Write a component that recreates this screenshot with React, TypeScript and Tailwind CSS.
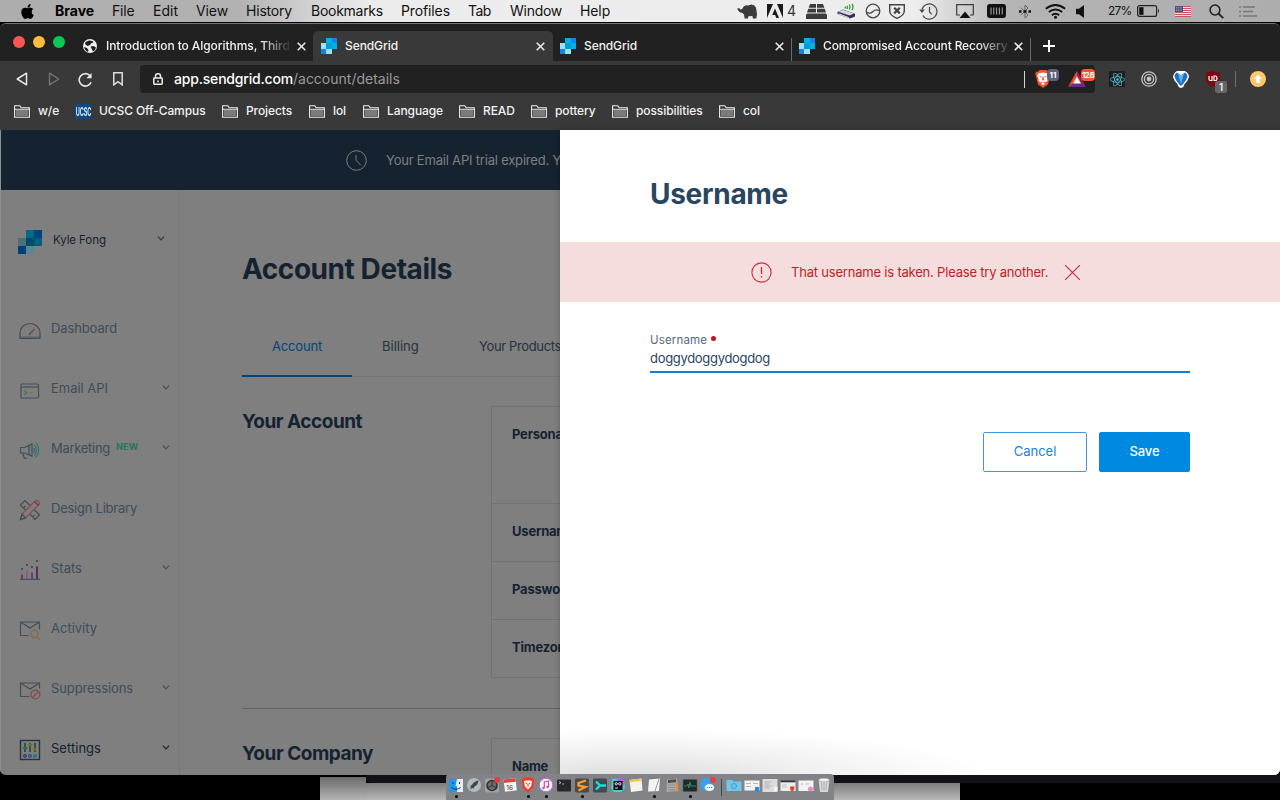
import React from "react";
import { FaApple, FaReact } from "react-icons/fa";

/* ---------- shared ---------- */

function GridLogo({ className, dim = false }: { className: string; dim?: boolean }) {
  const c = dim
    ? ["#006b84", "#00427f", "#4d7078", "#004b6b", "#00617d", "#003f7b", "#5c8790"]
    : ["#00b2e3", "#1a82e2", "#99e1f4", "#009dd9", "#00b2e3", "#1a82e2", "#99e1f4"];
  return (
    <svg viewBox="0 0 3 3" className={className} shapeRendering="crispEdges">
      <rect x="1" y="0" width="1" height="1" fill={c[0]} />
      <rect x="2" y="0" width="1" height="1" fill={c[1]} />
      <rect x="0" y="1" width="1" height="1" fill={c[2]} />
      <rect x="1" y="1" width="1" height="1" fill={c[3]} />
      <rect x="2" y="1" width="1" height="1" fill={c[4]} />
      <rect x="0" y="2" width="1" height="1" fill={c[5]} />
      <rect x="1" y="2" width="1" height="1" fill={c[6]} />
    </svg>
  );
}

function Lion({ className }: { className: string }) {
  return (
    <svg viewBox="0 0 16 18" className={className}>
      <path d="M4.5 0h7l1.6 1.7 1.7-.2 1 2.4-.6 1.5-2 8.3q-.3 1-1.2 1.6L8 18l-4-2.7q-.9-.6-1.2-1.6l-2-8.3L.2 3.9l1-2.4 1.7.2z" fill="#f9502a" />
      <path d="M3.5 3.2 8 2.6l4.5.6 1.3 2.4-1.5 3.6.3 1.5-2 1.7-1.2-.7-1.4.8-1.4-.8-1.2.7-2-1.7.3-1.5-1.5-3.6zM8 12.5l2.2 1.1L8 15.2l-2.2-1.6z" fill="#fff" />
      <path d="M4 5.8l2.7.6-.6 1.3zM12 5.8l-2.7.6.6 1.3zM7.4 7h1.2l.4 3-1 .7-1-.7z" fill="#f9502a" />
    </svg>
  );
}

/* ---------- macOS menu bar ---------- */

const menus: [string, string][] = [
  ["File", "w-[41px] tracking-[-0.2px]"],
  ["Edit", "w-[43px] tracking-[0px]"],
  ["View", "w-[50px] tracking-[-0.1px]"],
  ["History", "w-[65px] tracking-[-0.2px]"],
  ["Bookmarks", "w-[90px] tracking-[-0.27px]"],
  ["Profiles", "w-[67px] tracking-[-0.12px]"],
  ["Tab", "w-[42px] tracking-[-0.5px]"],
  ["Window", "w-[70px] tracking-[-0.27px]"],
  ["Help", "w-[40px] tracking-[-0.1px]"],
];

function MenuBar() {
  return (
    <div className="flex h-[22px] shrink-0 items-center bg-[linear-gradient(90deg,#adadad_0px,#b2b2b2_240px,#ececec_370px,#ededed_915px,#b4b4b4_1010px,#adadad_1280px)] text-[14px] leading-[22px] text-[#111]">
      <FaApple className="ml-[20px] h-[17px] w-[15px] shrink-0 text-black" />
      <span className="ml-[20px] w-[57px] font-bold text-black">Brave</span>
      {menus.map(([t, c]) => (
        <span key={t} className={`shrink-0 ${c}`}>{t}</span>
      ))}
      <svg viewBox="0 0 20 15" className="ml-[117px] h-[15px] w-[20px] shrink-0" fill="#3c3c3c">
        <path d="M.2 4.8 2 4l1.400 1.600 1.800-.6Q6.200 1.800 9 1.200l2.300.2 3-.9q4.300.3 5 4.800L20 10.200l-.7 4.400h-3.400l-.5-2.600-4 .2-.5 2.400H7.600L7 10.600 5.400 9l-2.600-.8L1.200 6.600z" />
      </svg>
      <svg viewBox="0 0 16 14" className="ml-[10px] h-[14px] w-[16px] shrink-0" fill="#1b1b1b">
        <path d="M0 0h6L0 14zM10 0h6v14zM8 4.600 12 14H9.300l-1.200-3H5.200z" />
      </svg>
      <span className="ml-[4px] w-[11px] shrink-0 text-[14px] text-[#333]">4</span>
      <svg viewBox="0 0 21 15" className="ml-[8px] h-[15px] w-[21px] shrink-0" fill="#3c3c3c">
        <path d="M4 0h6v3.800H2.700zM11 0h6l1.300 3.800H11zM2.300 4.800h7.700v3.600H1zM11 4.800h7.700L20 8.400h-9zM1 9.600h19l1 1.500V15H0v-4z" />
      </svg>
      <svg viewBox="0 0 19 16" className="ml-[10px] h-[16px] w-[19px] shrink-0">
        <path d="M.5 9 6 6.500l12 4.200v2.800L13 15.500.5 11z" fill="#2d2d55" />
        <path d="M1.200 8.800 6 6.800l11 3.800-4.500 2z" fill="#d5d8e5" />
        <path d="M1.500 10.200l10.500 4v.8L1.500 11.200z" fill="#f2f2f8" />
        <path d="M8.300 5.500V3.500M10.300 6V2.800M12.300 6.500Q13.800 4 12.300 1.500M14.800 7Q17 4 15 .8" fill="none" stroke="#28a032" strokeWidth="1.300" />
      </svg>
      <svg viewBox="0 0 16 16" className="ml-[9px] h-[16px] w-[16px] shrink-0" fill="none" stroke="#4a4a4a" strokeWidth="1.300">
        <circle cx="8" cy="8" r="6.800" />
        <path d="M1.500 9q3.500 2.500 6.500-.5t6.500-.5" />
      </svg>
      <svg viewBox="0 0 16 15" className="ml-[8px] h-[15px] w-[16px] shrink-0" fill="none" stroke="#444" strokeWidth="1.400">
        <path d="M.7.7h14.600v6q0 4.800-7.300 7.600Q.7 11.500.7 6.700z" />
        <path d="M5.200 3.800l5.600 5.600M10.800 3.800 5.200 9.400" strokeWidth="2.200" />
      </svg>
      <svg viewBox="0 0 19 17" className="ml-[14px] h-[17px] w-[19px] shrink-0" fill="none" stroke="#4a4a4a" strokeWidth="1.200">
        <path d="M3 6.500a7.600 7.600 0 1 1 .8 6" />
        <path d="M.2 6.500h5.600L3 10z" fill="#4a4a4a" stroke="none" />
        <path d="M10.500 4v5l2.300 2.300" />
      </svg>
      <svg viewBox="0 0 18 15" className="ml-[18px] h-[15px] w-[18px] shrink-0">
        <path d="M4 11H.7V.7h16.600V11H14" fill="none" stroke="#3a3a3a" strokeWidth="1.200" />
        <path d="M9 7.500 14.500 14h-11z" fill="#111" />
      </svg>
      <svg viewBox="0 0 19 14" className="ml-[13px] h-[14px] w-[19px] shrink-0">
        <rect x=".8" y=".8" width="17.400" height="12.400" rx="2" fill="#111" stroke="#111" strokeWidth="1.500" />
        <path d="M4 3.500v7M6.800 3.500v7M9.600 3.500v7M12.400 3.500v7M15.200 3.500v7" stroke="#a0a0a0" strokeWidth="1.100" />
      </svg>
      <svg viewBox="0 0 12 15" className="ml-[13px] h-[15px] w-[12px] shrink-0" fill="none" stroke="#666" strokeWidth="1">
        <path d="M2 3.700 9 11l-3 3V1l3 3-7 7.300" />
        <path d="M0 7.500h2.500M4.500 7.500h3M9.500 7.500H12" stroke="#111" strokeWidth="2.400" />
      </svg>
      <svg viewBox="0 0 21 15" className="ml-[14px] h-[15px] w-[21px] shrink-0" fill="none" stroke="#111" strokeWidth="1.900">
        <path d="M.8 4.800q9.700-7.600 19.400 0M3.800 8q6.700-5.200 13.400 0M6.800 11.200q3.700-2.800 7.400 0" />
        <circle cx="10.500" cy="13.200" r="1.500" fill="#111" stroke="none" />
      </svg>
      <svg viewBox="0 0 9 13" className="ml-[10px] h-[13px] w-[9px] shrink-0" fill="#111">
        <path d="M0 3.800h3L8 0v13L3 9.200H0z" />
      </svg>
      <span className="ml-[23px] w-[29px] shrink-0 text-[12px] tracking-[-0.8px]">27%</span>
      <svg viewBox="0 0 23 12" className="h-[12px] w-[23px] shrink-0">
        <rect x=".6" y=".6" width="19" height="10.800" rx="2" fill="none" stroke="#222" strokeWidth="1.200" />
        <rect x="2.200" y="2.200" width="4.300" height="7.600" fill="#111" />
        <path d="M21 3.800q2 2.200 0 4.400z" fill="#222" />
      </svg>
      <svg viewBox="0 0 16 11" className="ml-[15px] h-[11px] w-[16px] shrink-0">
        <rect width="16" height="11" fill="#f0dede" />
        <path d="M0 .5h16M0 2.500h16M0 4.500h16M0 6.500h16M0 8.500h16M0 10.500h16" stroke="#c4474c" strokeWidth=".9" />
        <rect width="8" height="6" fill="#4a4c86" />
        <path d="M1 1.500h6M1 3h6M1 4.500h6" stroke="#c9cbe0" strokeWidth=".6" strokeDasharray="1 .8" />
      </svg>
      <svg viewBox="0 0 15 15" className="ml-[18px] h-[15px] w-[15px] shrink-0" fill="none" stroke="#1c1c1c" strokeWidth="1.500">
        <circle cx="6" cy="6" r="4.900" />
        <path d="M9.600 9.600l4.600 4.600" strokeWidth="1.900" />
      </svg>
      <svg viewBox="0 0 18 11" className="ml-[15px] h-[11px] w-[18px] shrink-0" stroke="#777" strokeWidth="1.500">
        <path d="M0 1h2.200M4 1h12M0 5.500h2.200M4 5.500h10M0 10h2.200M4 10h14" />
      </svg>
    </div>
  );
}

/* ---------- browser chrome ---------- */

function CloseX() {
  return (
    <svg viewBox="0 0 9 9" className="h-[9px] w-[9px] shrink-0" stroke="#e8e8e8" strokeWidth="1.600">
      <path d="M.7.7l7.600 7.600M8.300.7.7 8.300" />
    </svg>
  );
}

function TabStrip() {
  return (
    <div className="flex h-[37px] shrink-0 items-end bg-[#212121] text-[12px] font-medium leading-[30px] text-[#f1f1f1]">
      <div className="mb-[13px] ml-[13px] flex gap-[8px]">
        <span className="h-[12px] w-[12px] rounded-full bg-[#fc5753]" />
        <span className="h-[12px] w-[12px] rounded-full bg-[#fdbc40]" />
        <span className="h-[12px] w-[12px] rounded-full bg-[#0bc855]" />
      </div>
      <div className="ml-[18px] flex h-[30px] w-[230px] items-center">
        <svg viewBox="0 0 14 14" className="h-[14px] w-[14px] shrink-0">
          <circle cx="7" cy="7" r="7" fill="#f0f0f0" />
          <path d="M6 1.500 9.500 2l1 1.500-2 .5-1.500 2L4.500 7 2 5l.5-2zM7.500 7.500l3-.5 2.500 1.500-1 2.500-2 1.500-1-2zM1 8l3 1 1.500 2-.5 2q-3-1-4-5z" fill="#212121" />
        </svg>
        <span className="ml-[9px] h-[30px] w-[184px] overflow-hidden whitespace-nowrap tracking-[-0.07px] [mask-image:linear-gradient(90deg,#000_155px,transparent_186px)]">Introduction to Algorithms, Third</span>
        <span className="ml-[7px] flex"><CloseX /></span>
      </div>
      <div className="flex h-[30px] w-[240px] items-center rounded-t-[5px] bg-[#393939] pl-[8px] pr-[8px]">
        <GridLogo className="h-[16px] w-[16px]" />
        <span className="ml-[8px] flex-1 tracking-[-0.08px]">SendGrid</span>
        <CloseX />
      </div>
      <div className="flex h-[30px] w-[238px] items-center pl-[7px] pr-[7px]">
        <GridLogo className="h-[16px] w-[16px]" />
        <span className="ml-[8px] flex-1 tracking-[-0.08px]">SendGrid</span>
        <CloseX />
      </div>
      <div className="h-[23px] w-px bg-[#6a6a6a]" />
      <div className="flex h-[30px] w-[238px] items-center pl-[7px]">
        <GridLogo className="h-[16px] w-[16px] shrink-0" />
        <span className="ml-[8px] h-[30px] w-[184px] overflow-hidden whitespace-nowrap tracking-[-0.16px] [mask-image:linear-gradient(90deg,#000_155px,transparent_190px)]">Compromised Account Recovery</span>
        <span className="ml-[7px] flex"><CloseX /></span>
      </div>
      <div className="h-[23px] w-px bg-[#6a6a6a]" />
      <svg viewBox="0 0 12 12" className="mb-[9px] ml-[12px] h-[12px] w-[12px]" stroke="#fff" strokeWidth="2">
        <path d="M6 0v12M0 6h12" />
      </svg>
    </div>
  );
}

function Toolbar() {
  return (
    <div className="flex h-[36px] shrink-0 items-center">
      <svg viewBox="0 0 12 14" className="ml-[16px] h-[14px] w-[12px]" fill="none" stroke="#e8e8e8" strokeWidth="1.500" strokeLinejoin="round">
        <path d="M10.500 1.200v11.600L1.200 7z" />
      </svg>
      <svg viewBox="0 0 12 14" className="ml-[20px] h-[14px] w-[12px]" fill="none" stroke="#757575" strokeWidth="1.400" strokeLinejoin="round">
        <path d="M1.500 1.200v11.600L10.800 7z" />
      </svg>
      <svg viewBox="0 0 15 15" className="ml-[18px] h-[15px] w-[15px]" fill="none" stroke="#e8e8e8" strokeWidth="1.600">
        <path d="M13.100 10.300A6.200 6.200 0 1 1 11.600 3.300" />
        <path d="M13.600 1v5.300H8.400z" fill="#e8e8e8" stroke="none" />
      </svg>
      <svg viewBox="0 0 10 14" className="ml-[20px] h-[14px] w-[10px]" fill="none" stroke="#e0e0e0" strokeWidth="1.500">
        <path d="M.8.800h8.400v12L5 9.600.8 12.800z" />
      </svg>
      <div className="ml-[17px] flex h-[28px] w-[955px] items-center rounded-[4px] bg-[#212121]">
        <svg viewBox="0 0 10 12" className="ml-[13px] h-[12px] w-[10px] shrink-0" fill="none" stroke="#eee" strokeWidth="1.500">
          <rect x=".8" y="5" width="8.400" height="6.200" rx=".6" />
          <path d="M2.500 5V3a2.500 2.200 0 0 1 5 0v2M5 7.400v1.800" />
        </svg>
        <span className="ml-[11px] whitespace-nowrap text-[14px] leading-[28px] text-white">
          <span className="font-medium tracking-[-0.19px]">app.sendgrid.com</span>
          <span className="text-[#9a9a9a]">/account/details</span>
        </span>
        <div className="ml-auto mr-[10px] h-[17px] w-px shrink-0 bg-[#d0d0d0]" />
        <div className="relative h-[18px] w-[33px] shrink-0">
          <Lion className="h-[18px] w-[16px]" />
          <span className="absolute left-[12px] top-[-1px] h-[12px] w-[12px] rounded-[4px] bg-[#5c6378] text-center text-[8px] font-bold leading-[12px] text-white">11</span>
        </div>
        <div className="relative h-[18px] w-[27px] shrink-0">
          <svg viewBox="0 0 18 16" className="mt-[1px] h-[16px] w-[18px]">
            <path d="M9 0 0 16l9-5.500z" fill="#ff4724" />
            <path d="M9 0l9 16-9-5.500z" fill="#9e1f63" />
            <path d="M0 16h18l-9-6z" fill="#662d91" />
            <path d="M9 5.500l4 7H5z" fill="#fff" />
          </svg>
          <span className="absolute left-[13px] top-[-1px] h-[12px] w-[14px] rounded-[4px] bg-[#fb542b] text-center text-[8px] font-bold leading-[12px] tracking-[-0.5px] text-white">128</span>
        </div>
      </div>
      <div className="ml-[14px] flex h-[16px] w-[16px] items-center justify-center bg-[#1e1e1e]">
        <FaReact className="h-[15px] w-[15px] text-[#58c4dc]" />
      </div>
      <svg viewBox="0 0 16 16" className="ml-[16px] h-[16px] w-[16px]" fill="none" stroke="#c4c4c4" strokeWidth="1.300">
        <circle cx="8" cy="8" r="7.200" />
        <circle cx="8" cy="8" r="4.600" />
        <circle cx="8" cy="8" r="2.400" fill="#c4c4c4" stroke="none" />
      </svg>
      <svg viewBox="0 0 16 17" className="ml-[16px] h-[17px] w-[16px]">
        <path d="M4 0h8q4 2.500 4 6-1 4-4.500 7-.5 3.500-3.500 4-3-.5-3.500-4Q1 10 0 6 .5 2 4 0z" fill="#fff" />
        <path d="M3.800 1.500 8 4.200l4.200-2.700q2.300 1.500 2.300 4-1.500 5-6.500 9.500Q3 10.500 1.500 5.500q0-2.500 2.300-4z" fill="#1f6fc4" />
        <path d="M5 2.300 8 4.300l3-2L9.500 8 8 13 6.500 8z" fill="#5db2f0" />
      </svg>
      <div className="relative ml-[17px] h-[16px] w-[14px]">
        <svg viewBox="0 0 14 16" className="h-[16px] w-[14px]">
          <path d="M7 0q3 1.800 7 1.800V8q0 5-7 8-7-3-7-8V1.800Q4 1.800 7 0z" fill="#800610" />
          <path d="M3 5v3q0 1.500 1.300 1.500H6V5M8 5v4.500h1.500Q11 9.500 11 7.300T9.500 5z" fill="none" stroke="#fff" strokeWidth="1.200" />
        </svg>
        <span className="absolute left-[9px] top-[10px] h-[12px] w-[12px] rounded-[2px] bg-[#666] text-center text-[10px] font-medium leading-[12px] text-white">1</span>
      </div>
      <div className="ml-[15px] h-[16px] w-px bg-[#707070]" />
      <svg viewBox="0 0 16 16" className="ml-[14px] h-[16px] w-[16px]">
        <circle cx="8" cy="8" r="8" fill="#fdc968" />
        <path d="M8 3.500 12.200 8H9.800v4H6.200V8H3.800z" fill="#fff" />
      </svg>
    </div>
  );
}

const bookmarks: [string, string][] = [
  ["w/e", "w-[61px]"],
  ["UCSC Off-Campus", "w-[147px]"],
  ["Projects", "w-[87px]"],
  ["lol", "w-[54px]"],
  ["Language", "w-[96px]"],
  ["READ", "w-[72px]"],
  ["pottery", "w-[81px]"],
  ["possibilities", "w-[107px]"],
  ["col", "w-[60px]"],
];

function Bookmarks() {
  return (
    <div className="flex h-[33px] shrink-0 items-center pb-[5px] pl-[14px] text-[12px] font-medium leading-[16px] tracking-[-0.09px] text-[#f2f2f2]">
      {bookmarks.map(([t, w]) => (
        <div key={t} className={`flex shrink-0 items-center gap-[8px] whitespace-nowrap ${w}`}>
          {t.startsWith("UCSC") ? (
            <span className="flex h-[15px] w-[16px] items-center justify-center bg-[#094a87]">
              <span className="scale-x-[0.62] scale-y-[1.25] text-[9px] font-bold leading-[15px] tracking-[-0.2px] text-[#dfe9f2]">UCSC</span>
            </span>
          ) : (
            <svg viewBox="0 0 16 13" className="h-[13px] w-[16px] shrink-0">
              <path d="M.6 12.300V.7h5.200l1.400 2h8.200v9.600z" fill="none" stroke="#f0f0f0" strokeWidth="1.100" strokeLinejoin="round" />
              <path d="M2 4.800h12v6.200H2z" fill="#7b7b7b" />
              <path d="M1 4.300h14" stroke="#f0f0f0" strokeWidth=".9" />
            </svg>
          )}
          <span>{t}</span>
        </div>
      ))}
    </div>
  );
}

/* ---------- page behind the drawer ---------- */

const SLATE = "#434e57";

const navIcons: Record<string, React.ReactNode> = {
  Dashboard: (
    <g>
      <path d="M1 19.500V14a10 9.500 0 0 1 20 0v5.500z" />
      <path d="M1 18.200h20" strokeWidth=".8" />
      <path d="M3.800 15h1.700M5 10.800l1.300.8M8 7.800l.7 1.200M11 6.800v1.500M16.800 15h1.500" stroke="#877446" />
      <path d="M11 14.800l4.500-4.800" stroke="#8a3f3c" strokeWidth="1.400" />
      <circle cx="10.800" cy="15" r="1.200" fill="#2f5f86" stroke="none" />
    </g>
  ),
  "Email API": (
    <g>
      <rect x="2" y="5" width="17.500" height="14" rx="1" />
      <path d="M2 8h17.500" />
      <path d="M5.500 11.500 7.500 13.500l-2 2" stroke="#2c7a60" />
      <path d="M9.500 13.800H14" stroke="#72803e" />
    </g>
  ),
  Marketing: (
    <g>
      <path d="M1.500 8.500h4L13 5v12L5.500 14H1.500zM4 14.500l1.200 4.700 2.600.3M10 6.500v9" />
      <path d="M14.500 8.800q2 2.500 0 5" stroke="#35698a" />
      <path d="M15.500 6q3.700 5 0 10.500" stroke="#35698a" />
      <path d="M17 3.500q5.500 7 0 15" stroke="#2c7a60" />
    </g>
  ),
  "Design Library": (
    <g>
      <path d="M1.500 6 6 1.500 20.500 16 16 20.500zM4.500 9l2-2M7.500 12l2-2M13.500 18l2-2" />
      <path d="M1.500 20.500 3 15 16.500 1.500q3.500-.5 4 3.500L6.500 19z" fill="#7f7f7f" stroke="#8a4e45" />
      <path d="M15.500 2.500l4 4" stroke="#8a2f3c" />
      <path d="M1.500 20.500 3 15l3.500 4z" />
    </g>
  ),
  Stats: (
    <g strokeWidth="2">
      <path d="M3 15.500v5" stroke="#80304a" />
      <path d="M8 11.500v9" stroke="#7c647c" />
      <path d="M13 13.500v7" stroke="#5a4380" />
      <path d="M18 7.500v13" stroke="#58305f" />
      <path d="M1 20.300h20" strokeWidth="1.200" />
      <path d="M3 9v2M8 5v2M13 7v2M18 1v2" />
    </g>
  ),
  Activity: (
    <g>
      <path d="M9.500 16.500H1.500V3h19v7.500M1.500 3l9.500 6 9.500-6" />
      <circle cx="15.500" cy="15" r="3.600" stroke="#8a6743" />
      <path d="M18 17.800l3 3" stroke="#8a6743" />
    </g>
  ),
  Suppressions: (
    <g>
      <path d="M10.500 17.500h-9V4h19v5.500M1.500 4l9.500 6 9.500-6" />
      <circle cx="16.500" cy="15.500" r="4.400" stroke="#8a4741" />
      <path d="M13.500 18.500l6-6" stroke="#8a4741" />
    </g>
  ),
  Settings: (
    <g>
      <rect x="1.500" y="1.500" width="19" height="19" stroke="#26353f" strokeWidth="1.400" />
      <path d="M6 4v9M11 4v9M16 4v9" stroke="#1c2a35" />
      <path d="M4 9h4.500" stroke="#187a3a" strokeWidth="2" />
      <path d="M8.700 6h4.600" stroke="#5d7d22" strokeWidth="2" />
      <path d="M13.500 10.500h4.500" stroke="#7a7a20" strokeWidth="2" />
      <circle cx="6" cy="16.800" r="1.300" stroke="#2a2f78" />
      <circle cx="11" cy="16.800" r="1.300" stroke="#1b4f8a" />
      <circle cx="16" cy="16.800" r="1.300" stroke="#0f6f8a" />
    </g>
  ),
};

const nav: [string, boolean, string][] = [
  ["Dashboard", false, "tracking-[-0.12px]"],
  ["Email API", true, "tracking-[-0.02px]"],
  ["Marketing", true, "tracking-[-0.29px]"],
  ["Design Library", false, "tracking-[-0.24px]"],
  ["Stats", true, "tracking-[0px]"],
  ["Activity", false, "tracking-[0px]"],
  ["Suppressions", true, "tracking-[-0.12px]"],
  ["Settings", true, "tracking-[0.03px]"],
];

function Chevron({ color }: { color: string }) {
  return (
    <svg viewBox="0 0 8 5" className="h-[5px] w-[8px] shrink-0" fill="none" stroke={color} strokeWidth="1.100">
      <path d="M.9.7 4 3.900 7.100.7" />
    </svg>
  );
}

function Sidebar() {
  return (
    <aside className="flex w-[180px] shrink-0 flex-col border-r border-[#76797b]">
      <div className="flex h-[108px] shrink-0 pl-[18px] pt-[40px]">
        <GridLogo className="h-[24px] w-[24px] shrink-0" dim />
        <span className="ml-[11px] w-[104px] text-[11.500px] leading-[21px] tracking-[-0.08px] text-[#15222e]">Kyle Fong</span>
        <span className="mt-[6px] flex h-[5px]"><Chevron color="#2a3843" /></span>
      </div>
      {nav.map(([t, more, track]) => {
        const active = t === "Settings";
        return (
          <div key={t} className="flex h-[60px] shrink-0 items-center pl-[19px] pr-[9px] text-[13px]">
            <svg viewBox="0 0 22 22" className="mt-[3px] h-[22px] w-[22px] shrink-0" fill="none" stroke={SLATE} strokeWidth="1.200">
              {navIcons[t]}
            </svg>
            <span className={`ml-[10px] leading-[20px] ${track} ${active ? "text-[#15222e]" : "text-[#3f4c57]"}`}>{t}</span>
            {t === "Marketing" && <span className="mb-[3px] ml-[6px] text-[9px] font-bold leading-[10px] tracking-[0.2px] text-[#23785a]">NEW</span>}
            {more && (
              <span className="mb-[1px] ml-auto flex">
                <Chevron color={active ? "#15222e" : "#3f4c57"} />
              </span>
            )}
          </div>
        );
      })}
    </aside>
  );
}

const fields: [string, string][] = [
  ["Personal Information", "h-[97px]"],
  ["Username", "h-[58px]"],
  ["Password", "h-[58px]"],
  ["Timezone", "h-[58px]"],
];

function AccountPage() {
  return (
    <div className="flex h-[645px] w-[560px] shrink-0 flex-col overflow-hidden border-l border-[#8d9092] bg-[#7f7f7f]">
      <div className="-ml-px flex h-[60px] shrink-0 items-center bg-[#152331] pl-[346px]">
        <svg viewBox="0 0 22 22" className="h-[22px] w-[22px] shrink-0" fill="none" stroke="#7f7f7f" strokeWidth="1">
          <circle cx="10.500" cy="11.500" r="9.800" />
          <path d="M10 6v5.200l4.800 5" />
        </svg>
        <span className="ml-[18px] whitespace-nowrap text-[13px] leading-[20px] tracking-[-0.2px] text-[#7f7f7f]">Your Email API trial expired. Your account is frozen.</span>
      </div>
      <div className="-ml-px flex min-h-0 flex-1">
        <Sidebar />
        <main className="flex w-[800px] shrink-0 flex-col pl-[62px]">
          <h1 className="mt-[59px] h-[40px] shrink-0 text-[28px] font-bold leading-[40px] tracking-[-0.44px] text-[#152331]">Account Details</h1>
          <div className="mt-[29px] flex h-[59px] shrink-0 border-b border-[#73787b] text-[13px] leading-[57px] text-[#26333e]">
            <span className="-mb-px w-[110px] border-b-2 border-[#00457a] text-center tracking-[-0.15px] text-[#00457a]">Account</span>
            <span className="ml-[30px] w-[97px]">Billing</span>
            <span className="whitespace-nowrap tracking-[-0.36px]">Your Products</span>
          </div>
          <section className="mt-[29px] flex shrink-0">
            <h2 className="w-[249px] shrink-0 text-[19px] font-bold leading-[31px] tracking-[-0.49px] text-[#152331]">Your Account</h2>
            <div className="w-[500px] shrink-0 border-l border-t border-[#6e7376]">
              {fields.map(([t, h]) => (
                <div key={t} className={`overflow-hidden border-b border-[#6e7376] pl-[20px] pt-[18px] text-[13px] font-bold leading-[19px] tracking-[-0.2px] text-[#152331] ${h}`}>{t}</div>
              ))}
            </div>
          </section>
          <div className="mt-[30px] h-px shrink-0 bg-[#5d656b]" />
          <section className="mt-[29px] flex shrink-0">
            <h2 className="w-[249px] shrink-0 text-[19px] font-bold leading-[31px] tracking-[-0.47px] text-[#152331]">Your Company</h2>
            <div className="h-[60px] w-[500px] shrink-0 border-l border-t border-[#6e7376] pl-[20px] pt-[18px] text-[13px] font-bold leading-[19px] tracking-[-0.27px] text-[#152331]">Name</div>
          </section>
        </main>
      </div>
    </div>
  );
}

/* ---------- drawer ---------- */

function Drawer() {
  return (
    <div className="flex h-[645px] w-[720px] shrink-0 flex-col bg-[radial-gradient(ellipse_350px_46px_at_80px_100%,#dedede_0%,#efefef_45%,#ffffff_100%)] bg-white shadow-[0_0_6px_rgba(0,0,0,0.25)]">
      <h1 className="mt-[44px] h-[40px] pl-[90px] text-[28px] font-bold leading-[40px] tracking-[-0.3px] text-[#294661]">Username</h1>
      <div className="mt-[28px] flex h-[60px] items-center bg-[#f5dddd] pl-[191px] text-[#be1d28]">
        <svg viewBox="0 0 22 22" className="h-[22px] w-[22px]" fill="none" stroke="#c42c37" strokeWidth="1.100">
          <circle cx="10.500" cy="11.500" r="9.600" />
          <path d="M10.500 6v7M10.500 15v1.500" strokeWidth="1.300" />
        </svg>
        <span className="mb-[1px] ml-[18px] w-[274px] whitespace-nowrap text-[13px] leading-[20px] tracking-[-0.2px]">That username is taken. Please try another.</span>
        <svg viewBox="0 0 15 15" className="h-[15px] w-[15px]" stroke="#c42c37" strokeWidth="1.100">
          <path d="M0 0l15 15M15 0 0 15" />
        </svg>
      </div>
      <div className="ml-[90px] mt-[29px] flex w-[540px] flex-col border-b-2 border-[#1580d8] pb-[3px]">
        <label className="flex h-[17px] items-center text-[11.500px] leading-[16px] tracking-[0.15px] text-[#546b81]">
          Username
          <span className="mb-[2px] ml-[4px] h-[5px] w-[5px] rounded-full bg-[#be1320]" />
        </label>
        <span className="h-[20px] text-[13px] leading-[21px] tracking-[-0.31px] text-[#294661]">doggydoggydogdog</span>
      </div>
      <div className="ml-[90px] mt-[59px] flex w-[540px] justify-end gap-[12px] text-[13px] leading-[37px]">
        <button className="h-[40px] w-[104px] rounded-[2px] border border-[#3f98e4] bg-white pb-[1px] text-[#1a82e2]">Cancel</button>
        <button className="h-[40px] w-[91px] rounded-[2px] border border-[#0089e1] bg-[#0089e1] pb-[1px] font-medium tracking-[-0.1px] text-white">Save</button>
      </div>
    </div>
  );
}

/* ---------- dock ---------- */

const dockApps: [string, boolean, React.ReactNode][] = [
  ["finder", true, <g><rect x="1" y="2" width="14" height="13" fill="#e4edf6" /><path d="M1 2h8L7.500 9H9v6H1z" fill="#1b9af5" /><path d="M3.500 10.500q4.500 3.500 9 0M5 5v2M11.500 5v2" stroke="#1d3557" fill="none" /></g>],
  ["launchpad", false, <g><circle cx="8" cy="8" r="7" fill="#b3b9be" /><path d="M12.500 3.500Q8 4 6 8l-2 1 1 .6-1 2.400 2.600-1 .6 1L8 10q4-2 4.500-6.500z" fill="#3e464c" /></g>],
  ["preferences", false, <g><rect x="1" y="1.500" width="14" height="14" rx="2" fill="#a2a5a7" /><circle cx="8" cy="8.500" r="5" fill="#6c7073" stroke="#2f3336" strokeWidth="1.600" /><path d="M8 8.500V4M8 8.500l-4 2M8 8.500l4 2" stroke="#2f3336" /><circle cx="13" cy="3" r="3" fill="#ea3c3c" /></g>],
  ["calendar", false, <g><path d="M1.500 2.500l12-1.300 1.300 12L3 14.800z" fill="#f4f4f4" /><path d="M1.500 2.500l12-1.300.4 3.500L2 6z" fill="#e2453e" /><text x="4.300" y="12.800" fontSize="6.500" fill="#333" fontFamily="Inter">16</text></g>],
  ["brave", true, <g><path d="M4.500.3h7L14.500 3 13 11l-5 5-5-5L1.500 3z" fill="#f43c22" /><path d="M4 4 8 3.300l4 .7-.8 5L8 12.500 4.800 9z" fill="#fff" /><path d="M5.500 6l2 1M10.500 6l-2 1M8 7v3" stroke="#f43c22" /></g>],
  ["music", true, <g><circle cx="8" cy="8" r="6.800" fill="#f7f4fa" stroke="#c264d8" strokeWidth="1" /><path d="M6.300 11V5l4.200-1v6" stroke="#e0489e" fill="none" strokeWidth="1.200" /><circle cx="5.400" cy="11" r="1.300" fill="#4d8cf0" /><circle cx="9.600" cy="10" r="1.300" fill="#ef4f86" /></g>],
  ["terminal", false, <g><rect x="1" y="2.500" width="14" height="12" rx="1" fill="#26282a" /><path d="M3 4.500l2 1.200-2 1.200M6 7h2" stroke="#ccc" fill="none" strokeWidth=".8" /></g>],
  ["sublime", true, <g><rect x="1" y="1.500" width="14" height="14" rx="1.500" fill="#4b4b4b" /><path d="M12 3.500 4.500 6v2.500l7 1.500-7 3.500" stroke="#ff9c26" strokeWidth="2.300" fill="none" /></g>],
  ["shell", false, <g><rect x="1" y="1.500" width="14" height="14" rx="1.500" fill="#414b50" /><path d="M4 4.500l4 4-4 4M8 8.500h6" stroke="#1fe0dc" strokeWidth="2.300" fill="none" /></g>],
  ["goland", false, <g><path d="M2 2l7-1 5 3 1 7-4 4H4L1 11z" fill="#3bd3d9" /><path d="M5 1l9 1v7z" fill="#b45cf2" /><rect x="3.500" y="4" width="9" height="9" fill="#0b0b0b" /><circle cx="6.200" cy="6.800" r="1.200" stroke="#fff" strokeWidth=".9" fill="none" /><circle cx="9.800" cy="6.800" r="1.200" stroke="#fff" strokeWidth=".9" fill="none" /><path d="M5 11h3" stroke="#fff" strokeWidth=".9" /></g>],
  ["notes", false, <g><path d="M1.500 3l12-1.500 1 12L3 15z" fill="#f5f3ee" /><path d="M1.500 3l12-1.500.2 2.300L1.800 5.200z" fill="#eac751" /></g>],
  ["textedit", true, <g><path d="M3 2.500l11-1-1 12.500-11 .5z" fill="#f3f3f3" /><path d="M13 2 9 14" stroke="#9a9a9a" /></g>],
  ["calculator", false, <g><path d="M3 2.500l10-1 1.500 12.500-12 1z" fill="#a9a9a9" /><path d="M4 3l8-.7.2 3L4 6z" fill="#4b4c4d" /><path d="M11.500 5.500l1.800-.2 1 9-2.300.2z" fill="#f08a2c" /><path d="M4 8h7M4 10.500h7M4 13h7" stroke="#888" strokeWidth=".8" /></g>],
  ["monitor", true, <g><rect x="1" y="2.500" width="14" height="12" rx="1" fill="#1f2b2a" stroke="#555" strokeWidth=".6" /><path d="M2 9h3l1-2 1 4 1-6 1 4h5" stroke="#3b9a78" fill="none" strokeWidth=".8" /></g>],
  ["messages", false, <g><circle cx="7" cy="7.500" r="6.500" fill="#32a3f7" /><ellipse cx="9.500" cy="10.500" rx="4.700" ry="3.600" fill="#f5f8fb" /><path d="M7 10.500h1.200M9 10.500h1.200M11 10.500h1.200" stroke="#3a7fd0" strokeWidth="1.200" /><circle cx="12.800" cy="3" r="2.900" fill="#ee3a3a" /></g>],
];

const dockFiles: [string, React.ReactNode][] = [
  ["downloads", <g><path d="M.5 3h6l1 1.500h8V14H.5z" fill="#6fc6ea" /><circle cx="8" cy="9" r="2.500" fill="none" stroke="#3f9dc6" /></g>],
  ["window-1", <g><rect x=".5" y="3.500" width="15" height="10" fill="#f2f2f2" /><path d="M2 6.500h5M9 6.500h5M2 9.500h5" stroke="#b5b5b5" /><rect x="11" y="10" width="4" height="4.500" fill="#1d8df0" /></g>],
  ["window-2", <g><rect x=".5" y="2" width="15" height="13" fill="#dcdcdc" /><path d="M2.500 5h7M2.500 7h5M2.500 9h7M2.500 11h5" stroke="#a5a5a5" strokeWidth=".8" /><path d="M12 10h3.500v4H12z" fill="#f8f8f8" /></g>],
  ["window-3", <g><rect x=".5" y="3.500" width="15" height="10.500" fill="#ececec" /><path d="M.5 4.300h15" stroke="#3c3040" strokeWidth="2" /><path d="M2 8h5M2 10h5" stroke="#c4c4c4" /><path d="M10 9.500h4.500l-.6 3.500-1.700 1.700-1.700-1.700z" fill="#ee3c24" /></g>],
  ["window-4", <g><rect x=".5" y="3.500" width="15" height="10.500" fill="#f3f3f3" /><path d="M3 7h2M8 7h3" stroke="#b5b5b5" /><circle cx="12.500" cy="12" r="2.500" fill="#e78ac6" /></g>],
  ["trash", <g><path d="M2.500 3h11L12 15H4z" fill="#d5d7d8" /><ellipse cx="8" cy="3" rx="5.500" ry="2" fill="#f1f1f1" stroke="#8c8c8c" strokeWidth=".7" /><path d="M5.500 6l.6 7M8 6v7M10.500 6l-.6 7" stroke="#a7a9aa" strokeWidth=".8" /></g>],
];

function Dock() {
  return (
    <div className="absolute bottom-0 left-[446px] flex h-[26px] w-[388px] rounded-t-[4px] bg-[#818386] pl-[1px]">
      {dockApps.map(([k, running, art]) => (
        <div key={k} className="flex w-[18px] shrink-0 flex-col items-center pt-[3px]">
          <svg viewBox="0 0 16 16" className="h-[16px] w-[16px] shrink-0">{art}</svg>
          {running && <span className="mt-[2px] h-[3px] w-[3px] rounded-full bg-black" />}
        </div>
      ))}
      <div className="ml-[4px] mr-[3px] mt-[5px] h-[17px] w-px bg-[#45474a]" />
      {dockFiles.map(([k, art]) => (
        <div key={k} className="flex w-[18px] shrink-0 flex-col items-center pt-[3px]">
          <svg viewBox="0 0 16 16" className="h-[16px] w-[16px] shrink-0">{art}</svg>
        </div>
      ))}
    </div>
  );
}

export default function App() {
  return (
    <div className="relative flex h-[800px] w-[1280px] flex-col overflow-hidden bg-black font-['Inter',sans-serif]">
      <MenuBar />
      <div className="mt-px flex h-[752px] shrink-0 flex-col overflow-hidden rounded-[6px] border-t border-[#757575] bg-[#393939]">
        <TabStrip />
        <Toolbar />
        <Bookmarks />
        <div className="flex min-h-0 flex-1">
          <AccountPage />
          <Drawer />
        </div>
      </div>
      <div className="flex h-[25px] shrink-0">
        <div className="ml-[320px] mt-[2px] w-[46px] bg-[linear-gradient(180deg,#6a6a6a,#b4b4b4)]" />
        <div className="flex flex-1 flex-col">
          <div className="h-[8px] rounded-bl-[5px] bg-[#101216]" />
          <div className="w-[594px] flex-1 bg-[linear-gradient(180deg,#7c7c7c,#b8b8b8)]" />
        </div>
      </div>
      <Dock />
    </div>
  );
}
